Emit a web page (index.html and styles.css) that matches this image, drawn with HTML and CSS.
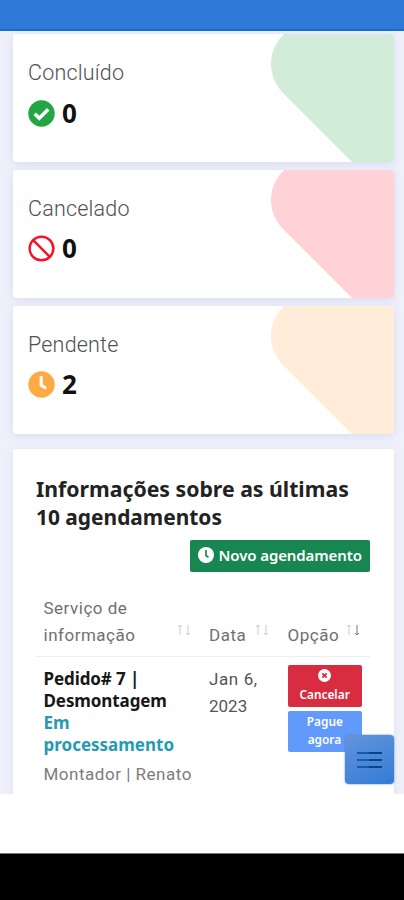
FILE: index.html
```html
<!DOCTYPE html>
<html lang="pt-BR">
<head>
<meta charset="utf-8">
<meta name="viewport" content="width=device-width, initial-scale=1">
<title>Agendamentos</title>
<link rel="stylesheet" href="styles.css">
</head>
<body>
<div class="screen">
  <header class="topbar"></header>
  <main class="content">
    <section class="card stat">
      <svg class="shape green" viewBox="0 0 123 128"><path d="M13 0A41 41 0 0 0 12 59L81 128H123V0Z"/></svg>
      <h2 class="label">Concluído</h2>
      <div class="count"><svg class="icon" viewBox="0 0 28 28"><circle cx="14" cy="14" r="13.7" fill="#22a543"/><path d="M7 14.2l4.7 4.7 9.3-9.3" fill="none" stroke="#fff" stroke-width="3.7"/></svg><span class="num">0</span></div>
    </section>
    <section class="card stat">
      <svg class="shape pink" viewBox="0 0 123 128"><path d="M13 0A41 41 0 0 0 12 59L81 128H123V0Z"/></svg>
      <h2 class="label">Cancelado</h2>
      <div class="count"><svg class="icon" viewBox="0 0 28 28"><g fill="none" stroke="#f51325" stroke-width="2.6"><circle cx="14" cy="14" r="12.3"/><path d="M5.4 5.4l17.2 17.2"/></g></svg><span class="num">0</span></div>
    </section>
    <section class="card stat">
      <svg class="shape orange" viewBox="0 0 123 128"><path d="M13 0A41 41 0 0 0 12 59L81 128H123V0Z"/></svg>
      <h2 class="label">Pendente</h2>
      <div class="count"><svg class="icon" viewBox="0 0 28 28"><circle cx="14" cy="14" r="13.7" fill="#ffaa42"/><path d="M13.7 6.5v8.5l4 2.2" fill="none" stroke="#fff" stroke-width="3.3" stroke-linecap="round" stroke-linejoin="round"/></svg><span class="num">2</span></div>
    </section>
    <section class="card bookings">
      <h1 class="title"><span class="line t1">Informações sobre as últimas</span><span class="line t2">10 agendamentos</span></h1>
      <div class="actions"><button class="new"><svg viewBox="0 0 16 16"><circle cx="8" cy="8" r="8" fill="#fff"/><path d="M8 3v5.5l2.5 1.7" fill="none" stroke="#178650" stroke-width="1.7"/></svg><span class="new-text">Novo agendamento</span></button></div>
      <div class="row head">
        <div class="cell"><span class="line">Serviço de</span><span class="line">informação</span></div>
        <div class="cell"><span class="line">Data</span></div>
        <div class="cell"><span class="line">Opção</span></div>
        <svg class="sort s1" viewBox="0 0 14 12"><path d="M3 11V1M1 3l2-2 2 2M11 1v10M9 9l2 2 2-2"/></svg>
        <svg class="sort s2" viewBox="0 0 14 12"><path d="M3 11V1M1 3l2-2 2 2M11 1v10M9 9l2 2 2-2"/></svg>
        <svg class="sort s3" viewBox="0 0 14 12"><path d="M3 11V1M1 3l2-2 2 2"/><path class="active" d="M11 1v10M9 9l2 2 2-2"/></svg>
      </div>
      <div class="row item">
        <div class="cell order"><span class="line">Pedido# 7 |</span><span class="line">Desmontagem</span><span class="line status">Em</span><span class="line status">processamento</span><span class="line worker">Montador | Renato</span></div>
        <div class="cell date"><span class="line day">Jan 6,</span><span class="line">2023</span></div>
        <div class="cell options">
          <button class="opt cancel"><svg viewBox="0 0 12 12"><circle cx="6" cy="6" r="6" fill="#fff"/><path d="M4 4l4 4M8 4l-4 4" stroke="#d82c40" stroke-width="1.6"/></svg><span class="line">Cancelar</span></button>
          <button class="opt pay"><span class="line">Pague</span><span class="line">agora</span></button>
        </div>
      </div>
    </section>
  </main>
  <button class="menu" aria-label="Menu"><i></i><i></i><i></i></button>
  <footer class="navbar"></footer>
</div>
</body>
</html>
```
FILE: styles.css
```css
* { box-sizing: border-box; }
body { margin: 0; background: #fff; font-family: Roboto, sans-serif; }
h1, h2 { margin: 0; font-weight: 400; }
button { border: 0; padding: 0; }
svg { display: block; flex: none; }
.screen { position: relative; width: 404px; height: 900px; overflow: hidden; display: flex; flex-direction: column; }
.topbar { height: 31px; flex: none; background: #2f79d8; border-bottom: 2px solid #1470d0; }
.content { height: 763px; flex: none; overflow: hidden; padding: 3px 10.5px 0 12.5px; background: #f0f0fb; }
.card { position: relative; background: #fff; border-radius: 3px; box-shadow: 0 2px 9px #dcdff0; }
.stat { height: 128px; margin-bottom: 7.8px; padding: 25px 0 0 15.5px; overflow: hidden; box-shadow: 0 2px 8px #d8dcee; }
.shape { position: absolute; top: 0; right: 0; width: 123px; height: 128px; }
.green { fill: #d2ecda; }
.pink { fill: #ffd2d8; }
.orange { fill: #ffecd9; }
.label { position: relative; font-size: 21.5px; line-height: 28px; font-weight: 300; letter-spacing: .2px; color: #505050; white-space: nowrap; }
.count { display: flex; align-items: center; gap: 7px; margin-top: 12px; height: 28px; }
.icon { width: 27px; height: 27px; }
.num { margin-top: -1px; font: 700 26px/28px "Noto Sans", sans-serif; color: #111; }
.line { display: block; width: max-content; white-space: nowrap; transform-origin: left center; }
.bookings { margin-top: 15.5px; height: 370px; padding: 26px 24px 0 23.5px; }
.title { font: 700 22px/27.5px "Noto Sans", sans-serif; color: #222; }
.t1 { transform: scaleX(.965); }
.t2 { transform: scaleX(.95); }
.actions { display: flex; justify-content: flex-end; margin-top: 10px; }
.new { width: 180px; height: 32px; display: flex; align-items: center; gap: 5px; padding-left: 8px; border-radius: 2px; background: #178650; color: #fff; font: 600 16px/30px "Noto Sans", sans-serif; white-space: nowrap; overflow: hidden; }
.new svg { width: 16px; height: 16px; margin-top: -2px; }
.new-text { flex: none; margin-top: -3px; font-size: 15px; letter-spacing: -.1px; }
.row { position: relative; display: grid; grid-template-columns: 165.5px 78.5px 1fr; padding-left: 7.5px; }
.head { height: 85px; padding-bottom: 7.5px; align-items: end; border-bottom: 1px solid #eee; font-size: 17px; line-height: 27px; letter-spacing: .5px; color: #707070; }
.sort { position: absolute; bottom: 20px; width: 14px; height: 12px; fill: none; stroke: #ccc; stroke-width: 1; }
.sort .active { stroke: #777; }
.s1 { left: 141px; }
.s2 { left: 219px; }
.s3 { left: 310px; }
.item { padding-top: 11px; }
.order { font: 700 17px/22px "Noto Sans", sans-serif; letter-spacing: -.1px; color: #171717; }
.status { color: #249bb0; letter-spacing: 0; }
.worker { margin-top: 5px; font: 400 17px/27px Roboto, sans-serif; letter-spacing: .52px; color: #7c7c7c; }
.date { font-size: 17px; line-height: 27px; color: #555; margin-top: -2px; }
.day { letter-spacing: .6px; }
.options { margin-top: -3px; }
.opt { width: 74px; height: 41px; display: flex; flex-direction: column; align-items: center; border-radius: 2px; color: #fff; font: 600 13px/18px "Noto Sans", sans-serif; }
.opt .line { transform: scaleX(.91); transform-origin: center; }
.cancel { height: 42px; padding-top: 4px; background: #d82c40; }
.cancel svg { width: 13px; height: 13px; margin-bottom: 3px; }
.pay { margin-top: 4px; padding-top: 1px; background: #619afa; }
.menu { position: absolute; left: 345px; top: 735px; width: 49px; height: 49px; display: flex; flex-direction: column; align-items: center; justify-content: center; gap: 5px; border-radius: 4px; background: linear-gradient(155deg, #6394dc, #347bd5); box-shadow: 0 0 2px #477bc2; }
.menu i { width: 25px; height: 2px; background: linear-gradient(90deg, #125bae 50%, #0b4388 50%); }
.navbar { height: 47px; flex: none; margin-top: 59px; background: #000; border-top: 1px solid #777; }
```
